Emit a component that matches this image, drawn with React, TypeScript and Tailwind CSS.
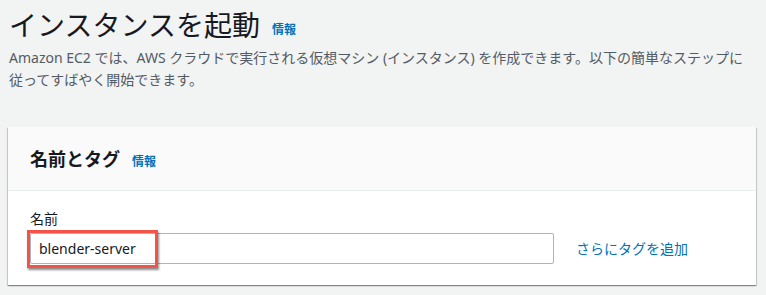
const font = "font-['Noto_Sans','Noto_Sans_CJK_JP',sans-serif]"

const InfoLink = () => (
	<a className="text-[12px] font-bold text-[#0073bb] leading-none">情報</a>
)

const App = () => {
	return (
		<div className={`${font} min-h-[295px] w-[766px] bg-[#f2f3f3] text-[#16191f]`}>
			<div className="px-[9px] pt-[7px]">
				<div className="flex items-center gap-[12px]">
					<h1 className="text-[28px] font-normal leading-[36px]">
						インスタンスを起動
					</h1>
					<span className="pt-[6px]">
						<InfoLink />
					</span>
				</div>
				<p className="mt-[4px] max-w-[738px] text-[14px] leading-[22px] text-[#545b64]">
					Amazon EC2 では、AWS クラウドで実行される仮想マシン (インスタンス) を作成できます。以下の簡単なステップに従ってすばやく開始できます。
				</p>
			</div>

			<section className="ml-[8px] mt-[36px] w-[748px] bg-white shadow-[0_1px_1px_0_rgba(0,28,36,0.3),1px_1px_1px_0_rgba(0,28,36,0.15),-1px_1px_1px_0_rgba(0,28,36,0.15)]">
				<div className="flex h-[64px] items-center gap-[12px] border-b border-[#eaeded] bg-[#fafafa] px-[22px]">
					<h2 className="text-[18px] font-bold leading-[24px]">名前とタグ</h2>
					<span className="pt-[3px]">
						<InfoLink />
					</span>
				</div>
				<div className="px-[22px] pb-[21px] pt-[18px]">
					<label className="block text-[14px] leading-[20px] text-[#16191f]">名前</label>
					<div className="mt-[4px] flex items-center gap-[22px]">
						<div className="relative">
							<input
								type="text"
								readOnly
								value="blender-server"
								className="h-[31px] w-[524px] rounded-[2px] border border-[#aab7b8] bg-white px-[8px] text-[14px] text-[#16191f] outline-none"
							/>
							<div className="pointer-events-none absolute left-[-3px] top-[-3px] h-[38px] w-[131px] border-[3px] border-[#f4534a] shadow-[1px_2px_2px_rgba(0,0,0,0.45)]" />
						</div>
						<a className="text-[14px] leading-[20px] text-[#0073bb]">さらにタグを追加</a>
					</div>
				</div>
			</section>
		</div>
	)
}

export default App
